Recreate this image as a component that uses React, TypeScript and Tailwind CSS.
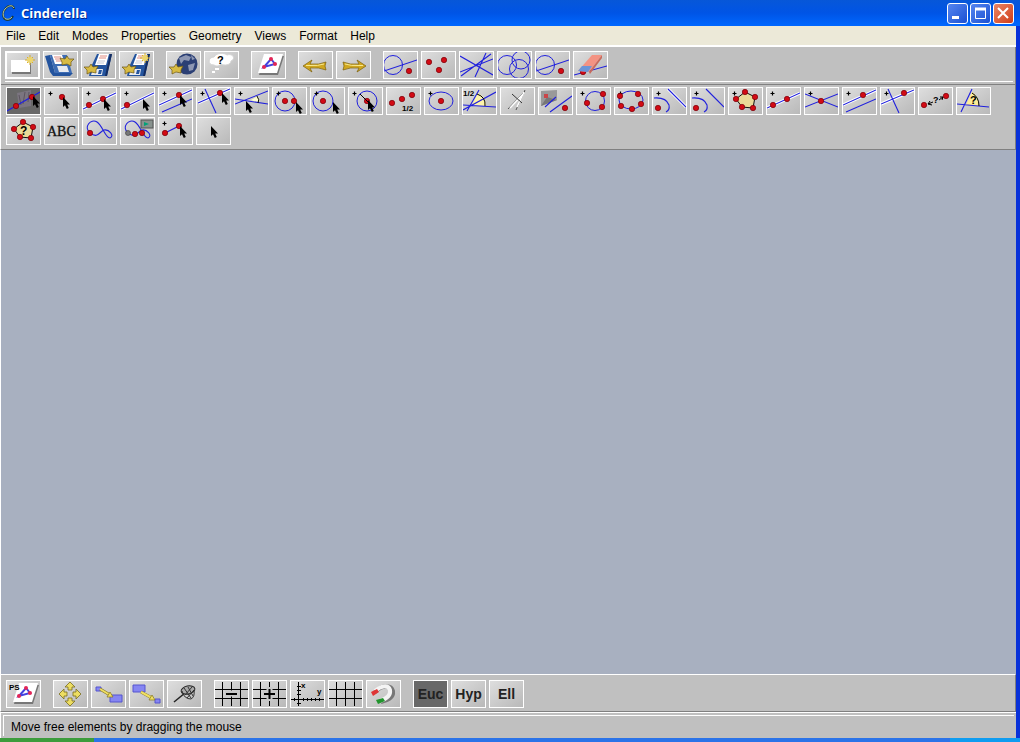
import type { ReactNode } from "react";

type Tool = { label: string; art: ReactNode; active?: boolean; focused?: boolean };

const BLUE = "#2020dd";

function Dot({ x, y, r = 3 }: { x: number; y: number; r?: number }) {
  return <circle cx={x} cy={y} r={r - 0.3} fill="#d20a14" stroke="#7a0008" strokeWidth="0.7" />;
}

function Plus({ x = 5, y = 5 }: { x?: number; y?: number }) {
  return <path d={`M${x - 1.5} ${y + 0.5}h4M${x + 0.5} ${y - 1.5}v4`} stroke="#000" strokeWidth="1.2" />;
}

function Cursor({ x, y }: { x: number; y: number }) {
  return (
    <path
      transform={`translate(${x} ${y})`}
      d="M0 0V10L2 8.2L3.8 12L5.8 11L4.2 7.4H7Z"
      fill="#000"
    />
  );
}

function Line({ d, halo = false }: { d: string; halo?: boolean }) {
  return (
    <>
      {halo && <path d={d} stroke="#fff" strokeWidth="3" fill="none" />}
      <path d={d} stroke={BLUE} strokeWidth="1.1" fill="none" />
    </>
  );
}

// gold hand-drawn arrow that marks load and save
function Swoosh({ x, y, flip = false }: { x: number; y: number; flip?: boolean }) {
  return (
    <path
      transform={`translate(${x} ${y}) scale(${flip ? -1 : 1} 1)`}
      d="M-7 -2L-2 -2L0 -5L2 -2L7 -3L5 1L5 4L0 3L-4 5L-4 1Z"
      fill="#d8bb43"
      stroke="#6d5814"
      strokeWidth="0.7"
    />
  );
}

function Burst({ x, y }: { x: number; y: number }) {
  return (
    <g stroke="#d5ab2c" strokeWidth="1">
      <path d={`M${x - 5} ${y}h10M${x} ${y - 5}v10M${x - 3} ${y - 3}l6 6M${x + 3} ${y - 3}l-6 6`} />
      <circle cx={x} cy={y} r="3" fill="#ecd56c" stroke="none" />
    </g>
  );
}

function Floppy() {
  return (
    <g>
      <path d="M15 2H30L25 24H7L9 15Z" fill="#24549e" />
      <path d="M30 2L25 24H23L28 2Z" fill="#142c60" />
      <path d="M17 2H27L24 13H13Z" fill="#fff" />
      <path d="M18 4h7M17 6h7" stroke="#e08b80" />
      <path d="M16 9h7M15 11h7" stroke="#c5cad6" />
      <path d="M11 17H21L20 23H9Z" fill="#e7eaf0" />
      <path d="M17 18h3l-1 4h-3Z" fill="#24549e" />
    </g>
  );
}

function Sheet() {
  return (
    <g>
      <path d="M12 4H32L26 23H7Z" fill="#777" />
      <path d="M12 2H31L25 21H6Z" fill="#fff" />
      <path d="M12 15L19 7L23 12Z" stroke="#4242df" strokeWidth="2" fill="none" />
      <circle cx="12" cy="15" r="2" fill="#e32655" />
      <circle cx="19" cy="7" r="2" fill="#e32655" />
      <circle cx="23" cy="12" r="2" fill="#e32655" />
    </g>
  );
}

function Pentagon() {
  return (
    <g>
      <path d="M16 4L26 9L24 20L13 19L7 11Z" fill="#ead998" stroke="#111" />
      <Dot x={16} y={4} />
      <Dot x={26} y={9} />
      <Dot x={24} y={20} />
      <Dot x={13} y={19} />
      <Dot x={7} y={11} />
    </g>
  );
}

function GoldArrow({ flip = false }: { flip?: boolean }) {
  return (
    <g transform={flip ? "matrix(-1 0 0 1 33 0)" : undefined}>
      <path d="M4 14L13 8L11 12Q20 13 27 10L26 14L27 18Q20 15 11 16L13 20Z" fill="#d0a71f" stroke="#7b5e0a" strokeWidth="0.7" />
      <path d="M7 13.5L11 13.5Q19 14 25 12" stroke="#f7e88e" />
    </g>
  );
}

function Grid({ children }: { children?: ReactNode }) {
  return (
    <g stroke="#000" strokeWidth="1">
      <path d="M0 8.5H33M0 17.5H33M7.5 1V25M16.5 1V25M25.5 1V25" />
      {children}
    </g>
  );
}

function SmallText({ x, y, children, size = 8 }: { x: number; y: number; children: string; size?: number }) {
  return (
    <text x={x} y={y} fill="#000" fontSize={size} fontWeight="700" fontFamily="Liberation Sans, sans-serif">
      {children}
    </text>
  );
}

function Loop() {
  return <Line d="M7 15C0 9 8 0 14 4C20 8 22 20 27 20C32 18 26 11 21 12C16 14 15 21 7 15" />;
}

const fileTools: Tool[] = [
  {
    label: "New",
    focused: true,
    art: (
      <>
        <path d="M6 10H25V22H6Z" fill="#777" />
        <path d="M5 8H24V20H5Z" fill="#fff" />
        <Burst x={24} y={8} />
      </>
    ),
  },
  {
    label: "Open",
    art: (
      <>
        <path d="M1 4L6 3L11 21H29L26 24H9L6 20Z" fill="#24549e" />
        <path d="M6 3H23L28 21H11Z" fill="#3d6cb4" />
        <path d="M8 3H18L21 12H11Z" fill="#fff" />
        <path d="M10 5h7M11 7h7M12 9h7" stroke="#e08b80" />
        <path d="M13 14H23L25 20H15Z" fill="#e7eaf0" />
        <Swoosh x={23} y={9} flip />
      </>
    ),
  },
  { label: "Save", art: <><Floppy /><Swoosh x={9} y={17} /></> },
  { label: "Save as", art: <><Floppy /><Swoosh x={9} y={17} /><Burst x={25} y={6} /></> },
];

const webTools: Tool[] = [
  {
    label: "Export to web",
    art: (
      <>
        <circle cx="20" cy="12" r="10.5" fill="#2b3f74" />
        <path d="M12 6L19 3L24 5L22 9L17 8L14 12ZM21 13L28 11L26 18L22 19ZM24 3l4 4l-3 1Z" fill="#8d97b3" />
        <Swoosh x={9} y={17} />
      </>
    ),
  },
  {
    label: "Ask",
    art: (
      <>
        <path d="M9 13C2 13 3 5 9 5C12 0 20 1 22 3C28 1 31 7 26 9C26 13 19 14 16 12C13 15 11 14 9 13Z" fill="#fff" stroke="#d4d4d4" />
        <path d="M10 17h4M7 20h3" stroke="#fff" strokeWidth="2" />
        <SmallText x={12} y={12} size={11}>?</SmallText>
      </>
    ),
  },
];

const selectTools: Tool[] = [
  {
    label: "Select all",
    art: <><circle cx="9" cy="13" r="9.5" stroke={BLUE} /><Line d="M0 19L33 8" /><Dot x={25} y={19} /></>,
  },
  { label: "Select points", art: <><Dot x={7} y={10} /><Dot x={22} y={8} /><Dot x={17} y={18} /></> },
  { label: "Select lines", art: <Line d="M0 4L33 23M0 20L33 7M26 1L15 25M1 24L31 2" /> },
  {
    label: "Select conics",
    art: (
      <g stroke={BLUE}>
        <circle cx="9" cy="13" r="9.5" /><circle cx="23" cy="8" r="9" /><circle cx="21" cy="17" r="9.5" />
      </g>
    ),
  },
  {
    label: "Deselect",
    art: <><circle cx="9" cy="13" r="9.5" stroke={BLUE} /><Line d="M0 19L33 8" /><Dot x={25} y={19} /></>,
  },
  {
    label: "Delete",
    art: (
      <>
        <Line d="M0 23L33 14" /><Dot x={9} y={20} />
        <path d="M4 19L18 3H28L15 20Z" fill="#f39383" />
        <path d="M15 20L28 3V6L16 22Z" fill="#c86a5c" />
        <path d="M4 19L8 14H18L14 20Z" fill="#6a95d8" />
      </>
    ),
  },
];

const geometryTools: Tool[] = [
  {
    label: "Move",
    active: true,
    art: <><path d="M10 5L24 2V18L12 20Z" fill="#7b7580" /><path d="M12 7L14 17M18 4L16 16M22 4L21 14" stroke="#5d5560" /><Line d="M0 23L33 4" /><Dot x={9} y={18} /><Dot x={25} y={9} /><Cursor x={26} y={8} /></>,
  },
  { label: "Add a point", art: <><Plus /><Dot x={17} y={9} /><Cursor x={18} y={9} /></> },
  { label: "Add a line", art: <><Plus /><Line d="M0 21L33 5" halo /><Dot x={6} y={17} /><Dot x={20} y={11} /><Cursor x={21} y={11} /></> },
  { label: "Line through point", art: <><Plus /><Line d="M0 21L33 5" halo /><Dot x={6} y={17} /><Cursor x={22} y={11} /></> },
  { label: "Parallel", art: <><Plus /><Line d="M0 17L33 2" halo /><Line d="M3 24L33 11" /><Dot x={20} y={7} /><Cursor x={21} y={7} /></> },
  { label: "Perpendicular", art: <><Plus /><Line d="M1 15L33 1" halo /><Line d="M8 1L19 25" /><Dot x={23} y={5} /><Cursor x={25} y={5} /></> },
  {
    label: "Angle line",
    art: <><Plus /><path d="M16 12L23 8Q25 12 24 15Z" fill="#ffffd0" /><Line d="M0 11L33 16M0 16L33 3" /><path d="M22 8Q25 12 23 15" stroke="#000" /><Cursor x={11} y={13} /></>,
  },
  { label: "Circle by radius", art: <><circle cx="12" cy="13" r="10" stroke={BLUE} /><Plus /><Dot x={12} y={13} /><Dot x={21} y={13} /><Cursor x={23} y={14} /></> },
  { label: "Circle around center", art: <><circle cx="12" cy="13" r="10" stroke={BLUE} /><Plus /><Dot x={12} y={13} /><Cursor x={22} y={14} /></> },
  { label: "Circle by fixed radius", art: <><circle cx="18" cy="13" r="10" stroke={BLUE} /><Plus /><Dot x={18} y={13} /><path d="M11 6L20 15" stroke="#000" /><Cursor x={19} y={12} /></> },
  { label: "Midpoint", art: <><Dot x={5} y={15} /><Dot x={15} y={11} /><Dot x={25} y={7} /><SmallText x={15} y={23}>1/2</SmallText></> },
  { label: "Conic center", art: <><ellipse cx="16" cy="13" rx="12" ry="9" stroke={BLUE} /><Plus /><Dot x={16} y={13} /></> },
  {
    label: "Angle bisector",
    art: <><path d="M9 17L15 5Q23 9 23 18Z" fill="#fff5aa" /><Line d="M0 17L33 19M4 23L16 2M0 22L33 4" /><path d="M14 6Q23 9 22 18" stroke="#000" /><SmallText x={0} y={8}>1/2</SmallText></>,
  },
  { label: "Compass", art: <><path d="M7 21L24 3M15 22L24 2" stroke="#555" /><path d="M9 20L23 5M16 19L23 4" stroke="#fff" strokeWidth="1.5" /><path d="M11 6L21 15" stroke="#333" /></> },
  { label: "Transformation", art: <><path d="M2 3L18 2V12L2 18Z" fill="#999" /><path d="M2 18L18 12L8 9Z" fill="#777" /><rect x="5" y="6" width="4" height="4" fill="#ca4548" /><Line d="M6 19L17 9M11 24L33 8" /><Dot x={26} y={20} /></> },
  { label: "Circle by three points", art: <><circle cx="18" cy="13" r="9.5" stroke={BLUE} /><Plus /><Dot x={26} y={6} /><Dot x={10} y={15} /><Dot x={25} y={19} /></> },
  { label: "Conic by five points", art: <><ellipse cx="16" cy="12" rx="12" ry="9" stroke={BLUE} /><Plus /><Dot x={5} y={8} /><Dot x={23} y={6} /><Dot x={26} y={16} /><Dot x={17} y={21} /><Dot x={6} y={18} /></> },
  { label: "Polar of point", art: <><Plus /><Line d="M1 10Q13 9 16 17Q17 22 13 24" /><Line d="M15 1L33 19" halo /><Dot x={5} y={20} /></> },
  { label: "Polar of line", art: <><Plus /><Line d="M1 10Q13 9 16 17Q17 22 13 24" /><Line d="M15 1L33 19" /><Dot x={5} y={20} /></> },
  { label: "Polygon", art: <><Plus /><Pentagon /></> },
  { label: "Join", art: <><Plus /><Line d="M0 20L33 5" halo /><Dot x={6} y={17} /><Dot x={20} y={11} /></> },
  { label: "Meet", art: <><Plus /><Line d="M0 6L33 19M0 19L33 6" /><Dot x={16} y={13} /></> },
  { label: "Parallel through point", art: <><Plus /><Line d="M0 17L33 2" halo /><Line d="M3 24L33 11" /><Dot x={20} y={7} /></> },
  { label: "Perpendicular through point", art: <><Plus /><Line d="M0 16L33 2" halo /><Line d="M7 1L18 25" /><Dot x={23} y={5} /></> },
  { label: "Measure distance", art: <><Dot x={5} y={17} /><Dot x={27} y={8} /><path d="M9 16L14 14M9 16L11 13M9 16L13 17M20 12L24 9L21 9M24 9L23 12" stroke="#000" /><SmallText x={14} y={15} size={9}>?</SmallText></> },
  { label: "Measure angle", art: <><path d="M9 17L15 4Q22 8 22 18Z" fill="#ffed94" /><Line d="M0 16L32 19M4 24L15 1" /><path d="M15 5Q22 9 22 18" stroke="#000" /><SmallText x={13} y={16} size={11}>?</SmallText></> },
  { label: "Measure area", art: <><Pentagon /><SmallText x={13} y={17} size={12}>?</SmallText></> },
  {
    label: "Text",
    art: <text x="2" y="18" fontSize="14" fontFamily="Liberation Serif, serif" fill="#111" stroke="#111" strokeWidth="0.3">ABC</text>,
  },
  { label: "Locus", art: <><Loop /><Dot x={7} y={15} /></> },
  {
    label: "Animation",
    art: <><Loop /><rect x="20" y="2" width="12" height="8" fill="#88928e" stroke="#555" /><path d="M23 4L28 6L23 8Z" fill="#00a278" /><circle cx="7" cy="15" r="2.5" fill="#777" stroke="#444" strokeWidth="0.7" /><Dot x={14} y={16} /><Dot x={21} y={15} /></>,
  },
  { label: "Segment", art: <><Plus /><Line d="M6 15L20 8" /><Dot x={6} y={15} /><Dot x={20} y={8} /><Cursor x={21} y={8} /></> },
  { label: "Interact", art: <Cursor x={14} y={8} /> },
];

const viewTools: Tool[] = [
  {
    label: "Pan",
    art: (
      <g fill="#eddd62" stroke="#786c20" strokeWidth="0.8">
        <path d="M16 1L21 6H18V9H14V6H11Z" /><path d="M16 25L21 20H18V17H14V20H11Z" />
        <path d="M5 13L10 8V11H13V15H10V18Z" /><path d="M27 13L22 8V11H19V15H22V18Z" />
      </g>
    ),
  },
  {
    label: "Zoom in",
    art: <><path d="M4 6h5v4H4ZM18 14H30V21H18Z" fill="#8686f2" stroke="#5555cf" /><path d="M8 8L18 14" stroke="#827420" strokeWidth="3" /><path d="M8 8L18 14" stroke="#f0df63" strokeWidth="2" /><path d="M21 16L15 16L18 11Z" fill="#f0df63" stroke="#827420" strokeWidth="0.7" /></>,
  },
  {
    label: "Zoom out",
    art: <><path d="M3 4H15V11H3ZM25 18h5v4h-5Z" fill="#8686f2" stroke="#5555cf" /><path d="M11 11L22 17" stroke="#827420" strokeWidth="3" /><path d="M11 11L22 17" stroke="#f0df63" strokeWidth="2" /><path d="M25 19L19 19L22 14Z" fill="#f0df63" stroke="#827420" strokeWidth="0.7" /></>,
  },
  {
    label: "Zoom all",
    art: <><path d="M6 21L17 12" stroke="#222" strokeWidth="1.5" /><ellipse cx="20" cy="9" rx="7" ry="4" fill="#aaa" stroke="#222" transform="rotate(-12 20 9)" /><path d="M14 10Q16 18 23 18Q27 16 26 9M16 7L23 17M20 6L25 15M24 6L17 14M26 9L19 17" stroke="#333" /></>,
  },
];

const gridTools: Tool[] = [
  { label: "Coarser grid", art: <Grid><path d="M10 12.5H23" stroke="#c8c8c8" strokeWidth="6" /><path d="M11 13H22" strokeWidth="2" /></Grid> },
  { label: "Finer grid", art: <Grid><path d="M10 12.5H23M16.5 6V20" stroke="#c8c8c8" strokeWidth="6" /><path d="M11 13H22M16.5 8V18" strokeWidth="2" /></Grid> },
  {
    label: "Show axes",
    art: <><path d="M7.5 1V25M0 18.5H33M6 5.5h4M6 9.5h4M6 13.5h4M6 22.5h4M3.5 17v3M12.5 17v3M16.5 17v3M20.5 17v3M24.5 17v3M28.5 17v3" stroke="#000" /><SmallText x={10} y={7}>x</SmallText><SmallText x={26} y={13}>y</SmallText></>,
  },
  { label: "Show grid", art: <Grid /> },
  {
    label: "Snap to grid",
    art: (
      <>
        <path d="M8 11C15 4 24 3 26 10C27 17 20 20 14 21" stroke="#777" strokeWidth="4" />
        <path d="M8 10C14 5 21 3 23 9C24 15 19 18 13 20" stroke="#f4f4f4" strokeWidth="4" />
        <path d="M4 11L10 8L12 11L6 15Z" fill="#df3535" />
        <path d="M9 19L16 17L18 20L11 23Z" fill="#21942d" />
      </>
    ),
  },
];

const modelTools = ["Euc", "Hyp", "Ell"];
const menus = ["File", "Edit", "Modes", "Properties", "Geometry", "Views", "Format", "Help"];

function ToolButton({ tool }: { tool: Tool }) {
  const fill = tool.active ? "bg-[#686868]" : "bg-linear-to-br from-[#dedede] to-[#b9b9b9]";
  const edge = tool.focused ? "border-2" : "border";
  return (
    <button
      type="button"
      aria-label={tool.label}
      title={tool.label}
      className={`flex h-7 w-[35px] shrink-0 items-center justify-center border-white ${fill} ${edge}`}
    >
      <svg viewBox="0 0 33 26" fill="none" className="h-[26px] w-[33px] shrink-0" aria-hidden="true">
        {tool.art}
      </svg>
    </button>
  );
}

function ToolGroup({ tools }: { tools: Tool[] }) {
  return (
    <div className="flex gap-[3px]">
      {tools.map((tool) => (
        <ToolButton key={tool.label} tool={tool} />
      ))}
    </div>
  );
}

function TitleBar() {
  return (
    <header className="flex h-[26px] shrink-0 items-center justify-between bg-linear-to-b from-[#0757d8] via-[#0054e6] to-[#0068ff] pr-[6px] pl-[2px]">
      <div className="flex items-center gap-[5px]">
        <svg viewBox="0 0 14 18" className="h-[18px] w-[14px]" fill="none" aria-hidden="true">
          <path d="M12 5C12 1 7 1 4 4C0 8 0 15 5 16C8 16 10 14 11 12" stroke="#1c3b3c" strokeWidth="2" />
          <path d="M12 4C10 0 6 2 3 5C0 9 1 14 4 15C7 16 9 14 10 13" stroke="#b9c9a4" strokeWidth="1" />
        </svg>
        <h1 className="font-['Open_Sans',sans-serif] text-[13px] leading-4 font-bold text-white [text-shadow:1px_1px_#00258a]">
          Cinderella
        </h1>
      </div>
      <div className="flex gap-[2px]">
        <button type="button" aria-label="Minimize" className="h-[21px] w-[21px] rounded-[3px] border border-white bg-linear-to-br from-[#5585f0] to-[#1a4fd2]">
          <svg viewBox="0 0 19 19" aria-hidden="true"><path d="M4 12H11V15H4Z" fill="#fff" /></svg>
        </button>
        <button type="button" aria-label="Maximize" className="h-[21px] w-[21px] rounded-[3px] border border-white bg-linear-to-br from-[#5585f0] to-[#1a4fd2]">
          <svg viewBox="0 0 19 19" fill="none" aria-hidden="true"><path d="M4.5 5V14.5H14.5V5" stroke="#fff" /><path d="M4 5H15" stroke="#fff" strokeWidth="3" /></svg>
        </button>
        <button type="button" aria-label="Close" className="h-[21px] w-[21px] rounded-[3px] border border-white bg-linear-to-br from-[#e98463] to-[#cf3a12]">
          <svg viewBox="0 0 19 19" aria-hidden="true"><path d="M4 4L14 14M14 4L4 14" stroke="#fff" strokeWidth="2" /></svg>
        </button>
      </div>
    </header>
  );
}

export default function App() {
  return (
    <div className="flex h-screen flex-col overflow-hidden bg-[#c0c0c0] font-['Liberation_Sans',Arial,sans-serif] text-xs text-black">
      <TitleBar />
      <div className="flex min-h-0 flex-1 flex-col border-r-4 border-[#0831d9]">
        <nav aria-label="Main menu" className="flex h-[21px] shrink-0 items-center gap-[13px] border-b-2 border-white bg-[#ece9d8] px-[6px]">
          {menus.map((menu) => (
            <button key={menu} type="button">{menu}</button>
          ))}
        </nav>
        <div className="border-r border-b border-l border-r-[#808080] border-b-[#808080] border-l-white">
          <div className="mr-[2px] mb-[2px] ml-1 flex gap-[12px] border-b border-white pt-1 pb-[2px]">
            <ToolGroup tools={fileTools} />
            <ToolGroup tools={webTools} />
            <ToolGroup tools={[{ label: "Edit appearance", art: <Sheet /> }]} />
            <ToolGroup tools={[{ label: "Undo", art: <GoldArrow /> }, { label: "Redo", art: <GoldArrow flip /> }]} />
            <ToolGroup tools={selectTools} />
          </div>
          <div className="flex flex-wrap gap-x-[3px] gap-y-[2px] border-t border-[#808080] pt-[2px] pr-5 pb-1 pl-[5px]">
            {geometryTools.map((tool) => (
              <ToolButton key={tool.label} tool={tool} />
            ))}
          </div>
        </div>
        <main className="min-h-0 flex-1 border-l border-white bg-[#a8b0c0]" />
        <div className="flex shrink-0 gap-[12px] border-t border-r border-b border-l border-t-white border-r-[#808080] border-b-[#808080] border-l-white pt-[5px] pb-[3px] pl-[5px]">
          <ToolGroup tools={[{ label: "Print PostScript", art: <><Sheet /><SmallText x={2} y={9}>PS</SmallText></> }]} />
          <ToolGroup tools={viewTools} />
          <ToolGroup tools={gridTools} />
          <div className="flex gap-[3px]">
            {modelTools.map((name, i) => (
              <button
                key={name}
                type="button"
                className={`h-7 w-[35px] border border-white text-sm font-bold text-[#222] ${i === 0 ? "bg-[#686868]" : "bg-linear-to-br from-[#dedede] to-[#b9b9b9]"}`}
              >
                {name}
              </button>
            ))}
          </div>
        </div>
        <footer className="shrink-0 border-t border-l border-white p-[2px]">
          <p className="border-t border-l border-white px-[7px] pt-[3px] pb-px leading-4">Move free elements by dragging the mouse</p>
        </footer>
      </div>
      <div className="flex h-1 shrink-0">
        <div className="w-[94px] bg-[#3c9c3c]" />
        <div className="flex-1 bg-[#2b73e8]" />
        <div className="w-[70px] bg-[#0f9cf0]" />
      </div>
    </div>
  );
}
